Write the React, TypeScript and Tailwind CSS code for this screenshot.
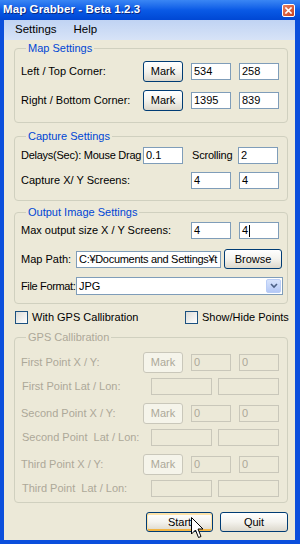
import React from 'react';

const btn =
  'flex items-center justify-center rounded-[3px] border border-[#003c74] bg-gradient-to-b from-[#ffffff] via-[#f4f3ee] to-[#dcd8cc] text-black';
const btnOff =
  'flex items-center justify-center rounded-[3px] border border-[#c9c7ba] bg-[#f5f4ea] text-[#aca899]';
const box = 'flex items-center h-[17px] border border-[#7f9db9] bg-white pl-[2px] text-black overflow-hidden whitespace-nowrap';
const boxOff = 'flex items-center h-[17px] border border-[#c9c7ba] bg-[#ece9d8] pl-[2px] text-[#aca899]';

const Legend: React.FC<{ text: string; off?: boolean }> = ({ text, off }) => (
  <legend className={`ml-[5px] px-[2px] leading-[14px] ${off ? 'text-[#aca899]' : 'text-[#0046d5]'}`}>{text}</legend>
);

const Check: React.FC<{ label: string }> = ({ label }) => (
  <div className="flex items-center gap-[4px]">
    <span className="w-[13px] h-[13px] border border-[#1c5180] bg-gradient-to-br from-[#dcdcd7] to-[#ffffff]" />
    <span>{label}</span>
  </div>
);

const GpsRow: React.FC<{ label: string }> = ({ label }) => (
  <div className="flex items-center h-[21px]">
    <span className="w-[122px] text-[#aca899]">{label}</span>
    <div className={`${btnOff} w-[40px] h-[21px]`}>Mark</div>
    <div className={`${boxOff} w-[40px] ml-[8px]`}>0</div>
    <div className={`${boxOff} w-[40px] ml-[8px]`}>0</div>
  </div>
);

const LatRow: React.FC<{ label: string }> = ({ label }) => (
  <div className="flex items-center h-[17px]">
    <span className="w-[130px] pl-[1px] text-[#aca899] whitespace-pre">{label}</span>
    <div className={`${boxOff} w-[61px]`} />
    <div className={`${boxOff} w-[61px] ml-[6px]`} />
  </div>
);

export default function App() {
  return (
    <div className="relative w-[300px] h-[544px] bg-[#0b4fdc] flex flex-col overflow-hidden font-['Liberation_Sans',Arial,sans-serif] text-[11px] text-black">
      {/* title bar */}
      <div className="h-[20px] flex items-center justify-between pl-[3px] pr-[5px] bg-gradient-to-b from-[#3a86f4] via-[#0a5ae6] to-[#0047d4]">
        <span className="text-white font-bold text-[11.5px] tracking-[0.1px] [text-shadow:1px_1px_0_#0a2a80]">
          Map Grabber - Beta 1.2.3
        </span>
        <div className="w-[13px] h-[13px] rounded-[2px] border border-white bg-gradient-to-br from-[#e9805f] to-[#c8421f] flex items-center justify-center">
          <svg width="7" height="7" viewBox="0 0 7 7">
            <path d="M1 1 L6 6 M6 1 L1 6" stroke="white" strokeWidth="1.6" strokeLinecap="square" />
          </svg>
        </div>
      </div>

      <div className="flex-1 ml-[4px] mr-[5px] mb-[4px] bg-[#ece9d8] flex flex-col">
        {/* menu */}
        <div className="h-[20px] flex items-center bg-gradient-to-b from-[#c0d3f3] to-[#d7e3f7] text-[11.5px]">
          <span className="ml-[11px]">Settings</span>
          <span className="ml-[17px]">Help</span>
        </div>

        {/* Map Settings */}
        <fieldset className="mt-[1px] ml-[10px] mr-[7px] border border-[#d0d0bf] rounded-[4px] pl-[6px] pr-[8px] pt-[6px] pb-[11px] flex flex-col gap-[8px]">
          <Legend text="Map Settings" />
          <div className="flex items-center h-[21px]">
            <span className="w-[122px]">Left / Top Corner:</span>
            <div className={`${btn} w-[40px] h-[21px]`}>Mark</div>
            <div className={`${box} w-[40px] ml-[8px]`}>534</div>
            <div className={`${box} w-[40px] ml-[8px]`}>258</div>
          </div>
          <div className="flex items-center h-[21px]">
            <span className="w-[122px]">Right / Bottom Corner:</span>
            <div className={`${btn} w-[40px] h-[21px]`}>Mark</div>
            <div className={`${box} w-[40px] ml-[8px]`}>1395</div>
            <div className={`${box} w-[40px] ml-[8px]`}>839</div>
          </div>
        </fieldset>

        {/* Capture Settings */}
        <fieldset className="mt-[6px] ml-[10px] mr-[7px] border border-[#d0d0bf] rounded-[4px] pl-[6px] pr-[8px] pt-[4px] pb-[11px] flex flex-col gap-[8px]">
          <Legend text="Capture Settings" />
          <div className="flex items-center h-[17px]">
            <span className="w-[122px] whitespace-nowrap tracking-[-0.25px]">Delays(Sec): Mouse Drag</span>
            <div className={`${box} w-[40px]`}>0.1</div>
            <span className="w-[46px] ml-[9px] tracking-[-0.2px]">Scrolling</span>
            <div className={`${box} w-[40px]`}>2</div>
          </div>
          <div className="flex items-center h-[17px]">
            <span className="w-[170px]">Capture X/ Y Screens:</span>
            <div className={`${box} w-[40px]`}>4</div>
            <div className={`${box} w-[40px] ml-[8px]`}>4</div>
          </div>
        </fieldset>

        {/* Output Image Settings */}
        <fieldset className="mt-[4px] ml-[10px] mr-[7px] border border-[#d0d0bf] rounded-[4px] pl-[6px] pr-[4px] pt-[3px] pb-[8px] flex flex-col">
          <Legend text="Output Image Settings" />
          <div className="flex items-center h-[17px]">
            <span className="w-[170px]">Max output size X / Y Screens:</span>
            <div className={`${box} w-[40px]`}>4</div>
            <div className={`${box} w-[40px] ml-[8px]`}>
              4<span className="w-px h-[12px] bg-black ml-[1px]" />
            </div>
          </div>
          <div className="flex items-center h-[20px] mt-[10px]">
            <span className="w-[55px]">Map Path:</span>
            <div className={`${box} w-[145px] tracking-[-0.3px]`}>C:¥Documents and Settings¥t</div>
            <div className={`${btn} w-[58px] h-[20px] ml-[3px]`}>Browse</div>
          </div>
          <div className="flex items-center h-[18px] mt-[8px]">
            <span className="w-[55px] whitespace-nowrap tracking-[-0.35px]">File Format:</span>
            <div className="flex items-center w-[207px] h-[18px] border border-[#7f9db9] bg-white pl-[2px]">
              <span className="flex-1">JPG</span>
              <div className="w-[15px] h-[14px] mr-px rounded-[2px] border border-[#b9cdf6] bg-gradient-to-b from-[#d8e4fc] to-[#b4c8f6] flex items-center justify-center">
                <svg width="8" height="6" viewBox="0 0 8 6">
                  <path d="M1 1 L4 4 L7 1" stroke="#4d6185" strokeWidth="1.6" fill="none" />
                </svg>
              </div>
            </div>
          </div>
        </fieldset>

        {/* checkboxes */}
        <div className="mt-[7px] ml-[11px] flex items-center h-[13px]">
          <div className="w-[170px]">
            <Check label="With GPS Callibration" />
          </div>
          <Check label="Show/Hide Points" />
        </div>

        {/* GPS Callibration */}
        <fieldset className="mt-[6px] ml-[10px] mr-[7px] border border-[#d0d0bf] rounded-[4px] pl-[6px] pr-[8px] pt-[8px] pb-[5px] flex flex-col">
          <Legend text="GPS Callibration" off />
          <GpsRow label="First Point X / Y:" />
          <div className="mt-[5px]"><LatRow label="First Point Lat / Lon:" /></div>
          <div className="mt-[8px]"><GpsRow label="Second Point X / Y:" /></div>
          <div className="mt-[5px]"><LatRow label="Second Point  Lat / Lon:" /></div>
          <div className="mt-[8px]"><GpsRow label="Third Point X / Y:" /></div>
          <div className="mt-[5px]"><LatRow label="Third Point  Lat / Lon:" /></div>
        </fieldset>

        {/* bottom buttons */}
        <div className="mt-[9px] mr-[7px] flex justify-end gap-[7px]">
          <div className={`${btn} w-[67px] h-[20px] shadow-[inset_0_1px_0_1px_#fde2a8,inset_0_-1px_0_1px_#f2b544]`}>Start</div>
          <div className={`${btn} w-[68px] h-[20px]`}>Quit</div>
        </div>
      </div>

      {/* mouse pointer */}
      <svg className="absolute left-[191px] top-[517px]" width="13" height="22" viewBox="0 0 13 22">
        <path d="M0.5 0.5 L0.5 17 L4.5 13 L7.5 20.5 L10 19.5 L7 12 L12 12 Z" fill="white" stroke="black" strokeWidth="1" />
      </svg>
    </div>
  );
}
